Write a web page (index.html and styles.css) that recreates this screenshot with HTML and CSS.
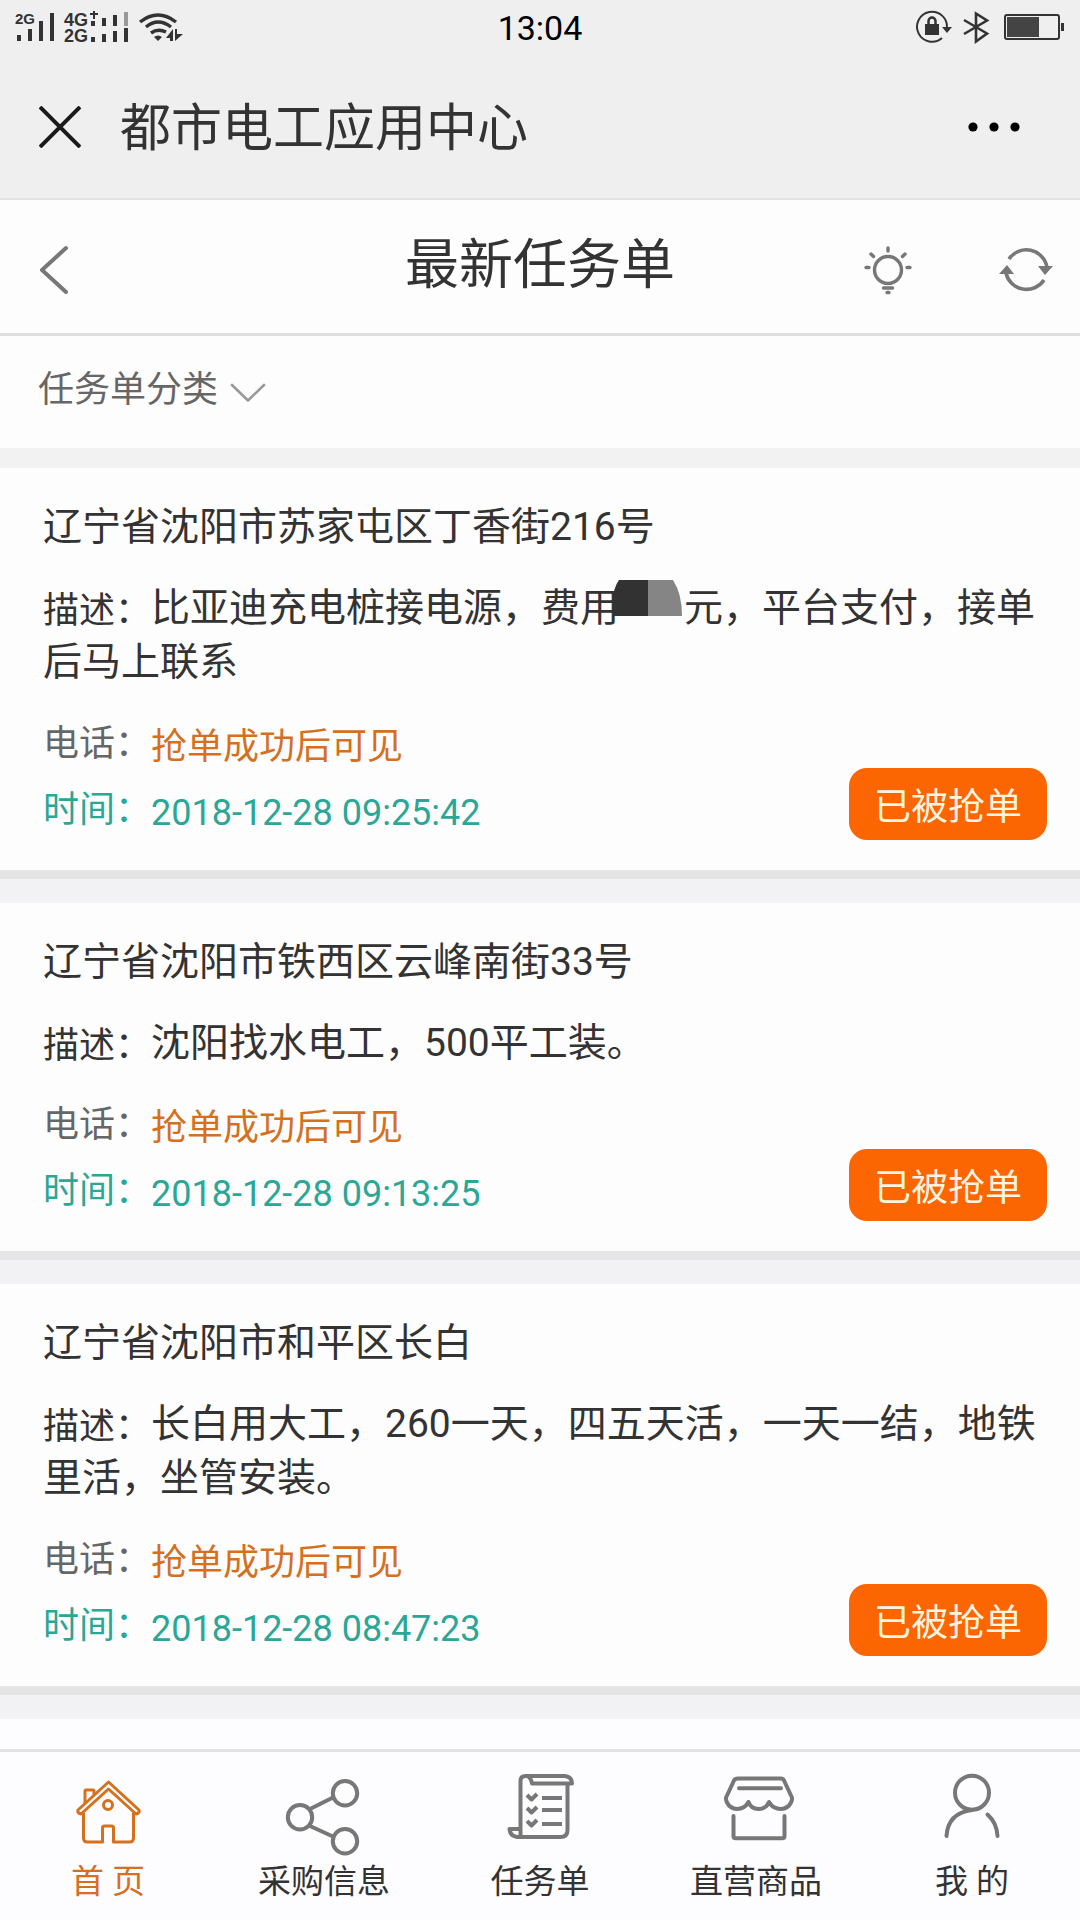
FILE: index.html
```html
<!DOCTYPE html>
<html lang="zh-CN">
<head>
<meta charset="utf-8">
<meta name="viewport" content="width=device-width, initial-scale=1">
<title>最新任务单</title>
<link rel="stylesheet" href="styles.css">
</head>
<body>
<div class="status">
  <svg class="status-left" width="190" height="56" viewBox="0 0 190 56" fill="#333">
    <text x="15" y="24" font-size="15">2G</text>
    <path d="M17 35h4v6h-4zM28 29h4v12h-4zM39 21h4v20h-4zM50 13h4v28h-4z"/>
    <text x="64" y="26" font-size="18">4G</text>
    <text x="64" y="42" font-size="18">2G</text>
    <path d="M90 14h8M94 11v8" stroke="#333" stroke-width="2"/>
    <path d="M91 21h4v5h-4zM102 18h4v8h-4zM113 15h4v11h-4zM91 37h4v5h-4zM102 34h4v8h-4zM113 31h4v11h-4zM124 28h4v14h-4z"/>
    <path d="M124 12h4v14h-4z" fill="#999"/>
    <g fill="none" stroke="#333" stroke-width="3.4">
      <path d="M140 22Q158 8 176 22M146 27Q158 17 171 27M151 33Q158 28 166 32"/>
    </g>
    <path d="M154 37q4-3 8 0l-4 4zM166 38l7-9v12h-3v-3zM175 41V29h2v5h6z"/>
  </svg>
  <span class="clock">13:04</span>
  <svg class="status-right" width="170" height="56" viewBox="910 0 170 56" fill="#333">
    <path d="M942 38A15 15 0 1 1 947 28" fill="none" stroke="#333" stroke-width="2"/>
    <path d="M942 27h10l-5 6z"/>
    <path d="M925 24h14v11h-14z"/>
    <path d="M928.500 25v-4a3.500 3.500 0 0 1 7 0v4" fill="none" stroke="#333" stroke-width="2.500"/>
    <path d="M964 20l23 13.500-11 8v-28l11 7L964 34" fill="none" stroke="#333" stroke-width="2.600"/>
    <rect x="1005" y="15" width="54" height="24" rx="2" fill="none" stroke="#333" stroke-width="2"/>
    <path d="M1007 17h32v20h-32z" fill="#444"/>
    <path d="M1061 23h3v8h-3z"/>
  </svg>
</div>
<header class="appbar">
  <button class="icon-btn" aria-label="关闭"><svg width="42" height="42" viewBox="0 0 42 42" fill="none" stroke="#1a1a1a" stroke-width="4"><path d="M1 1l40 40M41 1L1 41"/></svg></button>
  <span class="app-name">都市电工应用中心</span>
  <button class="icon-btn" aria-label="更多"><svg width="54" height="12" viewBox="0 0 54 12"><circle cx="6" cy="6" r="4.600"/><circle cx="27" cy="6" r="4.600"/><circle cx="48" cy="6" r="4.600"/></svg></button>
</header>
<div class="titlebar">
  <div class="side">
    <button class="icon-btn" aria-label="返回"><svg width="32" height="52" viewBox="0 0 32 52" fill="none" stroke="#777" stroke-width="4" stroke-linecap="round" stroke-linejoin="round"><path d="M28 4L4 26l24 22"/></svg></button>
  </div>
  <h1>最新任务单</h1>
  <div class="side side-end">
    <button class="icon-btn" aria-label="提示"><svg width="50" height="50" viewBox="0 0 50 50" fill="none" stroke="#777" stroke-width="3.400" stroke-linecap="round"><circle cx="25" cy="25" r="13.500"/><path d="M25 3v3M8 9l2.500 2.500M42 9l-2.500 2.500M3 22.500h3M44 22.500h3M20.500 43h9M24 47.500h2"/></svg></button>
    <button class="icon-btn" aria-label="刷新"><svg width="56" height="50" viewBox="0 0 56 50" fill="none" stroke="#777" stroke-width="3.600"><path d="M11 14A21 21 0 0 1 49 22M46 35A21 21 0 0 1 8 28"/><path d="M40 21h15l-8 9zM1 29h15l-7-9z" fill="#777" stroke="none"/></svg></button>
  </div>
</div>
<div class="filter">
  <button class="filter-btn">任务单分类
    <svg width="36" height="20" viewBox="0 0 36 20" fill="none" stroke="#999" stroke-width="2.600" stroke-linecap="round" stroke-linejoin="round"><path d="M2 2l16 15.500L34 2"/></svg>
  </button>
</div>
<main class="list">
  <article class="card">
    <h2>辽宁省沈阳市苏家屯区丁香街216号</h2>
    <p class="desc"><span class="label">描述：</span>比亚迪充电桩接电源，费用<span class="mask"><svg width="71" height="36" viewBox="0 0 71 36"><path d="M7 0h29v36H1V22Q1 8 7 0z" fill="#323232"/><path d="M36 0h25q9 14 9 36H36z" fill="#858585"/></svg></span>元，平台支付，接单后马上联系</p>
    <div class="foot">
      <dl>
        <div class="row"><dt>电话：</dt><dd>抢单成功后可见</dd></div>
        <div class="row time"><dt>时间：</dt><dd>2018-12-28 09:25:42</dd></div>
      </dl>
      <button class="grab">已被抢单</button>
    </div>
  </article>
  <article class="card">
    <h2>辽宁省沈阳市铁西区云峰南街33号</h2>
    <p class="desc"><span class="label">描述：</span>沈阳找水电工，500平工装。</p>
    <div class="foot">
      <dl>
        <div class="row"><dt>电话：</dt><dd>抢单成功后可见</dd></div>
        <div class="row time"><dt>时间：</dt><dd>2018-12-28 09:13:25</dd></div>
      </dl>
      <button class="grab">已被抢单</button>
    </div>
  </article>
  <article class="card">
    <h2>辽宁省沈阳市和平区长白</h2>
    <p class="desc"><span class="label">描述：</span>长白用大工，260一天，四五天活，一天一结，地铁里活，坐管安装。</p>
    <div class="foot">
      <dl>
        <div class="row"><dt>电话：</dt><dd>抢单成功后可见</dd></div>
        <div class="row time"><dt>时间：</dt><dd>2018-12-28 08:47:23</dd></div>
      </dl>
      <button class="grab">已被抢单</button>
    </div>
  </article>
</main>
<nav class="tabs">
  <a class="tab active" href="#home">
    <svg width="80" height="88" viewBox="0 0 80 88"><path d="M10 40L40.500 12 71 40q1 3-3 4L40.500 19 13 44q-4-1-3-4z"/><path d="M15.500 43v25q0 4 4 4h15V58q0-2 2-2h7q2 0 2 2v14h16q4 0 4-4V43"/><circle cx="40" cy="35" r="4.500"/><path d="M17 33V21q0-1 1-1h7q1 0 1 1v4"/></svg>
    <span>首 页</span>
  </a>
  <a class="tab" href="#purchase">
    <svg width="80" height="88" viewBox="0 0 80 88"><circle cx="61" cy="23.300" r="12.200"/><circle cx="16" cy="47.300" r="12.200"/><circle cx="61" cy="71.300" r="12.200"/><path d="M26 39l24-12M26 56l24 11"/></svg>
    <span>采购信息</span>
  </a>
  <a class="tab" href="#tasks">
    <svg width="80" height="88" viewBox="0 0 80 88"><path d="M20.500 66V11q0-5 5-5H65q7 1 7 7.500H32q-1-6-5-7.500M67.500 14v46q0 7-7 7H17q-7-1-7.500-8h11v4"/><path d="M27 25l4.500 4.500L37 24M27 38l4.500 4.500L37 37M27 51l4.500 4.500L37 50M42 28h20M42 40h20M42 54h20" stroke-width="4"/></svg>
    <span>任务单</span>
  </a>
  <a class="tab" href="#shop">
    <svg width="80" height="88" viewBox="0 0 80 88" stroke-linecap="round"><path d="M22 8.500h43q2 0 3 2l7 15q2 3 0 7-3 6-10 6.500-8 0-12-7-3 7-10.500 7T32.500 32q-4 7-11.500 7-7-.500-10-6.500-2-4 0-7l7-15q1-2 4-2zM23 18.300h42"/><path d="M17.500 46v20q0 2.300 2.300 2.300h46.400q2.300 0 2.300-2.300V46"/></svg>
    <span>直营商品</span>
  </a>
  <a class="tab" href="#me">
    <svg width="80" height="88" viewBox="0 0 80 88" stroke-linecap="round"><circle cx="40" cy="22.700" r="17"/><path d="M40 40Q16 43 14.500 66M55.500 44.500Q65 53 65.500 66"/></svg>
    <span>我 的</span>
  </a>
</nav>
</body>
</html>
```
FILE: styles.css
```css
* { box-sizing: border-box; margin: 0; padding: 0; }

body {
  display: flex;
  flex-direction: column;
  height: 100vh;
  background: #fdfdfd;
  color: #333;
  font-family: Roboto, "Noto Sans CJK SC", sans-serif;
  font-size: 36px;
  text-spacing-trim: space-all;
}

svg { display: block; flex: none; }
button { border: 0; background: none; color: inherit; font: inherit; }

.status {
  display: grid;
  grid-template-columns: 1fr auto 1fr;
  align-items: center;
  background: #efefef;
}
.status-left { font-family: "Liberation Sans", sans-serif; font-weight: bold; }
.status-right { justify-self: end; }
.clock { color: #000; font-size: 34px; line-height: 56px; }

.appbar {
  display: flex;
  align-items: center;
  gap: 39px;
  height: 144px;
  padding: 0 59px 0 39px;
  background: #efefef;
  border-bottom: 2px solid #e3e3e3;
}
.app-name { flex: 1; padding-top: 3px; font-size: 51px; line-height: 72px; }

.titlebar {
  display: grid;
  grid-template-columns: 1fr auto 1fr;
  align-items: center;
  height: 136px;
  padding: 6px 26px 0;
  border-bottom: 3px solid #dfdfdf;
}
.titlebar h1 { padding-bottom: 7px; font-size: 54px; line-height: 72px; font-weight: 400; }
.side { display: flex; padding-left: 12px; }
.side-end { justify-content: flex-end; gap: 85px; }

.filter { padding: 27px 38px 31px; }
.filter-btn {
  display: flex;
  align-items: center;
  gap: 12px;
  color: #666;
  line-height: 54px;
}
.filter-btn svg { margin-top: 6px; }

.list {
  flex: 1;
  min-height: 0;
  overflow: hidden;
  padding-top: 20px;
  background: linear-gradient(#f2f2f2 50%, #fdfcfe 50%);
}
.card {
  padding: 32px 33px 24px 43px;
  background: #fdfdfd;
  border-bottom: 9px solid #e6e5e6;
  box-shadow: 0 24px #f2f1f3;
  margin-bottom: 24px;
}
.card h2 { font-size: 39px; line-height: 54px; font-weight: 400; }
.desc { margin: 27px 10px 25px 0; font-size: 39px; line-height: 54px; }
.label { font-size: 36px; line-height: 36px; vertical-align: -2px; }

/* Blurred-out amount: the blot overlaps the text before it */
.mask {
  position: relative;
  display: inline-block;
  width: 65px;
  height: 36px;
}
.mask svg { position: absolute; right: 1px; bottom: 5px; }

.foot { display: flex; justify-content: space-between; align-items: flex-end; }
.row { display: flex; }
.row dt { color: #666; line-height: 60px; }
.row dd { color: #d4701e; line-height: 66px; }
.time dt, .time dd { color: #2aa796; }
.grab {
  width: 198px;
  height: 72px;
  margin-bottom: 6px;
  border-radius: 18px;
  background: #fb6502;
  color: #fff4e0;
  font-size: 37px;
}

.tabs {
  display: grid;
  grid-template-columns: repeat(5, 1fr);
  padding: 18px 0 14px;
  background: #fdfcfe;
  border-top: 3px solid #e2e1e3;
}
.tab {
  display: flex;
  flex-direction: column;
  align-items: center;
  color: #333;
  font-size: 33px;
  line-height: 48px;
  text-decoration: none;
}
.tab svg { fill: none; stroke: #777; stroke-width: 4px; stroke-linejoin: round; }
.active { color: #d4701e; }
.tab.active svg { stroke: #d4701e; stroke-width: 3px; }
```
